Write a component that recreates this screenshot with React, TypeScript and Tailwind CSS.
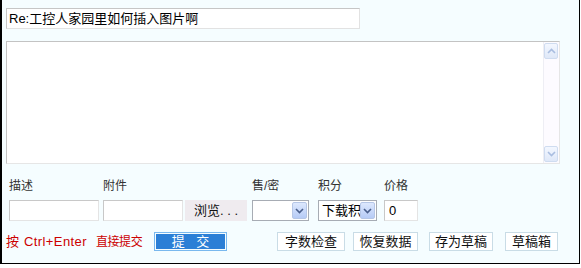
import React from "react";

const font = { fontFamily: '"Liberation Sans", "Noto Sans CJK SC", sans-serif' };

function Chevron({ up }: { up?: boolean }) {
  return (
    <svg width="9" height="6" viewBox="0 0 9 6">
      <path
        d={up ? "M1 5 L4.5 1.5 L8 5" : "M1 1 L4.5 4.5 L8 1"}
        fill="none"
        stroke={up ? "#a9bde0" : "#4a5f8c"}
        strokeWidth="1.6"
      />
    </svg>
  );
}

function Select({ w, text }: { w: string; text?: string }) {
  return (
    <div className={`${w} h-[21px] flex items-stretch bg-white border border-[#a7acb4] p-px`}>
      <div className="flex-1 text-[13px] leading-[17px] pl-[2px] text-black overflow-hidden whitespace-nowrap">
        {text}
      </div>
      <div className="w-[15px] flex items-center justify-center border border-[#b5c6e6] rounded-[2px] bg-gradient-to-b from-[#dde8fd] to-[#b6cbf6]">
        <Chevron />
      </div>
    </div>
  );
}

function GrayBtn({ label, w, ml }: { label: string; w: string; ml: string }) {
  return (
    <div
      className={`${w} ${ml} h-[19px] bg-white border border-[#c9dce6] flex items-center justify-center text-[13px] text-[#111]`}
    >
      {label}
    </div>
  );
}

export default function App() {
  return (
    <div className="w-[581px] h-[268px] bg-white" style={font}>
      <div className="w-[580px] h-[264px] bg-[#f5fdff] border-l-2 border-r border-b border-black pl-[4px] pt-[8px]">
        {/* title */}
        <div className="w-[354px] h-[21px] bg-white border border-[#c6c6c6] border-b-[#e2e2e2] border-r-[#e2e2e2] text-[13px] leading-[19px] pl-[2px] text-black">
          Re:工控人家园里如何插入图片啊
        </div>

        {/* textarea */}
        <div className="mt-[12px] w-[554px] h-[123px] bg-white border border-[#c3c3c3] border-b-[#e6e6e6] border-r-[#e6e6e6] flex justify-end">
          <div className="w-[16px] h-full bg-[#fdfbff] border-l border-[#eeeef4] flex flex-col justify-between py-px pr-px">
            <div className="h-[16px] rounded-[2px] border border-[#cfdcf0] bg-gradient-to-b from-[#f3f7ff] to-[#dfe8f8] flex items-center justify-center">
              <Chevron up />
            </div>
            <div className="h-[16px] rounded-[2px] border border-[#cfdcf0] bg-gradient-to-b from-[#f3f7ff] to-[#dfe8f8] flex items-center justify-center">
              <svg width="9" height="6" viewBox="0 0 9 6">
                <path d="M1 1 L4.5 4.5 L8 1" fill="none" stroke="#a9bde0" strokeWidth="1.6" />
              </svg>
            </div>
          </div>
        </div>

        {/* fields */}
        <div className="mt-[14px] pl-[3px] flex text-[12px] text-[#333]">
          <div className="w-[90px]">
            <div className="h-[22px] leading-[17px]">描述</div>
            <div className="h-[21px] bg-white border border-[#c8c8c8] border-b-[#e4e4e4] border-r-[#e4e4e4]" />
          </div>
          <div className="ml-[4px]">
            <div className="h-[22px] leading-[17px]">附件</div>
            <div className="flex">
              <div className="w-[80px] h-[21px] bg-white border border-[#c8c8c8] border-b-[#e4e4e4] border-r-[#e4e4e4]" />
              <div className="ml-[2px] w-[62px] h-[21px] bg-[#efebef] flex items-center justify-center text-[13px] text-[#111]">
                浏览. . .
              </div>
            </div>
          </div>
          <div className="ml-[5px]">
            <div className="h-[22px] leading-[17px]">售/密</div>
            <Select w="w-[57px]" />
          </div>
          <div className="ml-[9px]">
            <div className="h-[22px] leading-[17px]">积分</div>
            <Select w="w-[59px]" text="下载积" />
          </div>
          <div className="ml-[7px]">
            <div className="h-[22px] leading-[17px]">价格</div>
            <div className="w-[34px] h-[21px] bg-white border border-[#c8c8c8] border-b-[#e4e4e4] border-r-[#e4e4e4] text-[13px] leading-[19px] pl-[4px] text-black">
              0
            </div>
          </div>
        </div>

        {/* actions */}
        <div className="mt-[11px] flex items-start">
          <div className="w-[148px] h-[19px] flex items-center text-[#cc0000] whitespace-nowrap">
            <span className="text-[13px]">按</span>
            <span className="ml-[5px] text-[13px] tracking-[0.4px]">Ctrl+Enter</span>
            <span className="ml-[9px] text-[12px] tracking-[-0.4px]">直接提交</span>
          </div>
          <div className="w-[73px] h-[19px] border border-[#79b8ee] p-px">
            <div className="w-full h-full bg-[#2b7fd6] flex items-center justify-center text-[13px] text-white tracking-[4px] pl-[4px]">
              提 交
            </div>
          </div>
          <GrayBtn label="字数检查" w="w-[68px]" ml="ml-[50px]" />
          <GrayBtn label="恢复数据" w="w-[65px]" ml="ml-[8px]" />
          <GrayBtn label="存为草稿" w="w-[64px]" ml="ml-[11px]" />
          <GrayBtn label="草稿箱" w="w-[53px]" ml="ml-[12px]" />
        </div>
      </div>
    </div>
  );
}
